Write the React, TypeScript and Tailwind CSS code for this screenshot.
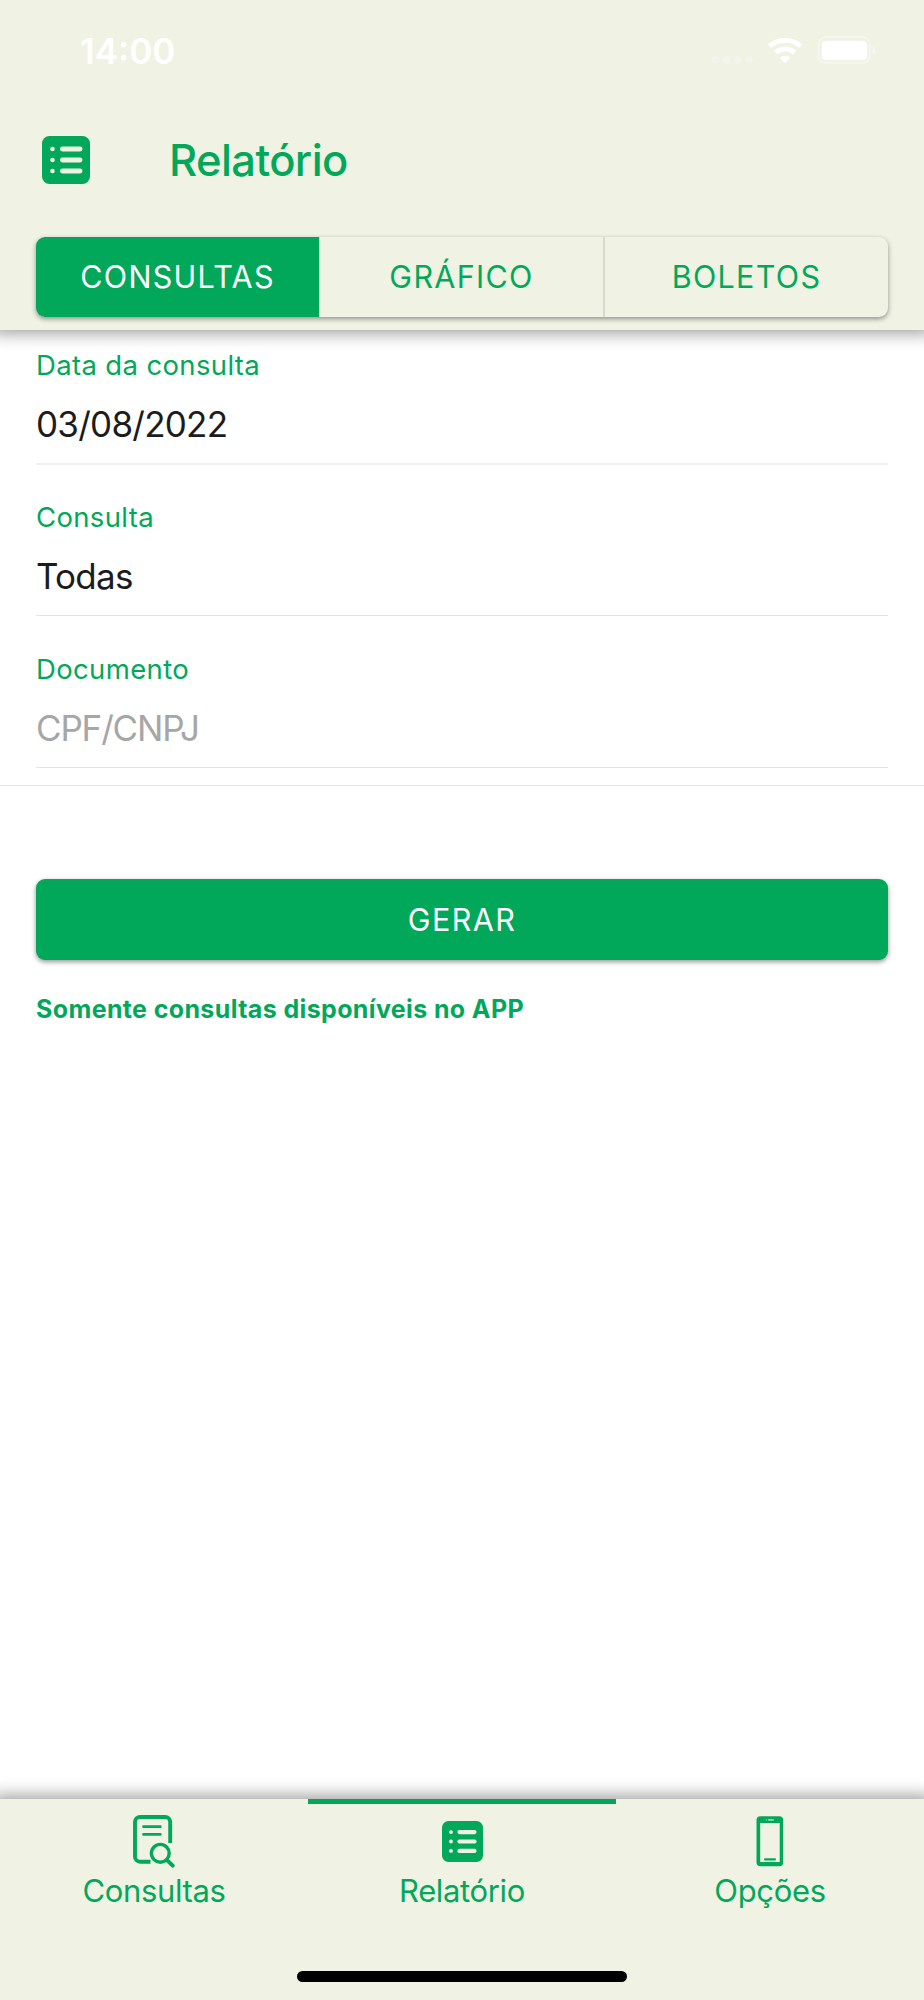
import React from "react";

const GREEN = "#02a85a";

function ListIcon({ size }: { size: number }) {
  return (
    <svg width={size} height={size} viewBox="0 0 48 48" className="block shrink-0">
      <rect width="48" height="48" rx="7.5" fill={GREEN} />
      {[13, 24, 35].map((y) => (
        <g key={y} fill="#f0f2e4">
          <circle cx="10.5" cy={y} r="2.3" />
          <rect x="18" y={y - 2.4} width="22.5" height="4.8" rx="2.4" />
        </g>
      ))}
    </svg>
  );
}

function SearchDocIcon() {
  return (
    <svg width="44" height="54" viewBox="0 0 44 54" fill="none" stroke={GREEN} strokeLinecap="round" className="block">
      <path d="M18.5 46.7H8a5 5 0 0 1-5-5V7a5 5 0 0 1 5-5h25.2a5 5 0 0 1 5 5V28" strokeWidth="3.9" strokeLinecap="butt" />
      <path d="M11.5 11.7H28.3M11.5 19.4H28.3" strokeWidth="2.8" />
      <circle cx="28.3" cy="38.3" r="8.9" strokeWidth="3.4" />
      <path d="M34.8 44.8L40.7 50.7" strokeWidth="4" />
    </svg>
  );
}

function PhoneIcon() {
  return (
    <svg width="28" height="51" viewBox="0 0 28 51" className="block">
      <path
        fill={GREEN}
        fillRule="evenodd"
        d="M4.5 0.3H23.2A4 4 0 0 1 27.2 4.3V46.2A4 4 0 0 1 23.2 50.2H4.5A4 4 0 0 1 .5 46.2V4.3A4 4 0 0 1 4.5 .3ZM4.2 7V46H23.7V7Z"
      />
      <rect x="8" y="42.3" width="12" height="2.3" rx="1" fill={GREEN} />
      <rect x="12" y="3" width="6" height="1.7" rx=".6" fill="#9bd4ae" />
      <circle cx="10.4" cy="3.9" r=".7" fill="#9bd4ae" />
    </svg>
  );
}

function StatusIcons() {
  return (
    <svg width="170" height="32" viewBox="0 0 170 32" className="block">
      {[3.5, 14.6, 25.8, 37].map((x) => (
        <circle key={x} cx={x} cy="23.7" r="3.9" fill="#f3f5ea" />
      ))}
      <g fill="none" stroke="#fff" strokeWidth="5">
        <path d="M57.4 10.2A23.5 23.5 0 0 1 88.8 10.2" />
        <path d="M63.7 16.6A14 14 0 0 1 82.5 16.6" />
      </g>
      <path d="M73.1 27.3L67.7 22A7.7 7.7 0 0 1 78.5 22Z" fill="#fff" />
      <rect x="106.6" y="1.1" width="51.4" height="25.8" rx="7.5" fill="none" stroke="#f5f6ee" strokeWidth="2.2" />
      <rect x="109.7" y="4.7" width="45.5" height="19.4" rx="4.5" fill="#fff" />
      <path d="M161 10V18.6A4.7 4.7 0 0 0 161 10Z" fill="#f7f8f1" />
    </svg>
  );
}

function Field({ label, value, muted, first }: { label: string; value: string; muted?: boolean; first?: boolean }) {
  return (
    <div className={first ? "pt-[18px]" : "pt-[35px]"}>
      <div className="h-[34px] text-[27.5px] leading-[34px] tracking-[0.35px] text-[#02a85a]">{label}</div>
      <div
        className={
          "mt-[20px] h-[61px] text-[35px] leading-[45px] " +
          (muted ? "tracking-[-1.15px] text-[#a6a6a6]" : "tracking-[-0.75px] text-[#1c1c1c]")
        }
      >
        {value}
      </div>
      <div className={first ? "h-[2px] bg-[#f2f2f2]" : "h-[2px] border-t border-[#e4e4e4]"} />
    </div>
  );
}

function Tab({ label, icon, active }: { label: string; icon: React.ReactNode; active?: boolean }) {
  return (
    <div className={"flex flex-1 flex-col items-center border-t-[5px] " + (active ? "border-[#02a85a]" : "border-transparent")}>
      <div className="mt-[10px] flex h-[55px] items-center justify-center">{icon}</div>
      <div className="mt-[3px] text-[31px] leading-[38px] tracking-[-0.35px]">{label}</div>
    </div>
  );
}

export default function App() {
  return (
    <div className="flex h-[2000px] w-[924px] flex-col overflow-hidden bg-white font-['Inter',sans-serif] text-[#02a85a]">
      <header className="h-[330px] bg-[#f0f2e4] px-[36px] shadow-[0_-5px_16px_8px_rgba(0,0,0,0.4)]">
        <div className="flex h-[100px] items-start justify-between pt-[31px] pr-[6px] pl-[44px] text-white">
          <div className="text-[35px] leading-[40px] font-semibold">14:00</div>
          <div className="pt-[5px]">
            <StatusIcons />
          </div>
        </div>
        <div className="flex h-[120px] items-center pl-[6px]">
          <ListIcon size={48} />
          <h1 className="ml-[79px] text-[43.5px] leading-[52px] font-[450] tracking-[-0.6px]">Relatório</h1>
        </div>
        <div className="mt-[17px] flex h-[80px] rounded-[9px] text-[30.5px] tracking-[1.3px] shadow-[0_2px_5px_rgba(0,0,0,0.4)]">
          <div className="flex flex-1 items-center justify-center rounded-l-[9px] bg-[#02a85a] text-white">CONSULTAS</div>
          <div className="flex flex-1 items-center justify-center border-r-2 border-l border-r-[#d8dacd] border-l-[#d8dacd]">
            GRÁFICO
          </div>
          <div className="flex flex-1 items-center justify-center">BOLETOS</div>
        </div>
      </header>
      <main className="flex-1">
        <div className="h-[456px] border-b border-[#e6e6e6] px-[36px]">
          <Field label="Data da consulta" value="03/08/2022" first />
          <Field label="Consulta" value="Todas" />
          <Field label="Documento" value="CPF/CNPJ" muted />
        </div>
        <div className="px-[36px] pt-[93px]">
          <button className="block h-[81px] w-full rounded-[9px] bg-[#02a85a] text-[30.5px] tracking-[1.4px] text-white shadow-[0_2px_5px_rgba(0,0,0,0.42)]">
            GERAR
          </button>
          <p className="mt-[33px] text-[25px] leading-[32px] font-bold tracking-[0.37px]">Somente consultas disponíveis no APP</p>
        </div>
      </main>
      <footer className="flex h-[201px] flex-col bg-[#f0f2e4] shadow-[0_5px_16px_8px_rgba(0,0,0,0.4)]">
        <nav className="flex h-[172px]">
          <Tab label="Consultas" icon={<SearchDocIcon />} />
          <Tab label="Relatório" icon={<ListIcon size={41} />} active />
          <Tab label="Opções" icon={<PhoneIcon />} />
        </nav>
        <div className="mx-auto h-[11px] w-[330px] rounded-full bg-black" />
      </footer>
    </div>
  );
}
